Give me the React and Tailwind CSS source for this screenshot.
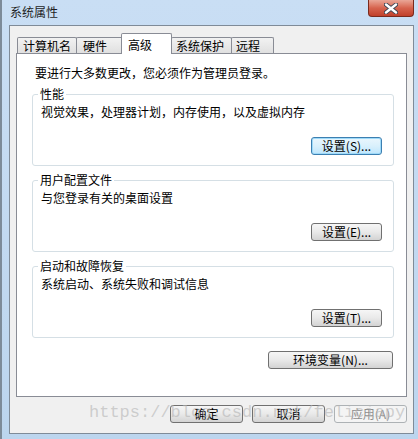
import React from 'react';

const FONT = { fontFamily: '"Noto Sans CJK SC", "Noto Sans", sans-serif' };

function Btn({ children, className = '', variant = 'normal' }) {
  const look = {
    normal: 'border-[#707070] bg-linear-to-b from-[#f6f6f6] via-[#e9e9e9] to-[#d3d3d3] text-black',
    default: 'border-[#3c7fb1] bg-linear-to-b from-[#eaf6fd] via-[#d9f0fc] to-[#bee6fd] text-black shadow-[inset_0_0_0_1px_#9edaf9]',
    disabled: 'border-[#adb2b5] bg-[#f4f4f4] text-[#8d8d8d]',
  }[variant];
  return (
    <div className={`h-[18px] flex items-center justify-center rounded-[3px] border text-[12px] leading-[14px] ${look} ${className}`}>
      {children}
    </div>
  );
}

function Group({ title, desc, button, className = '' }) {
  return (
    <fieldset className={`mx-[15px] mr-[12px] border border-[#d5dfe5] rounded-[3px] pb-[10px] ${className}`}>
      <legend className="ml-[5px] px-[2px] text-[12px] leading-[14px]">{title}</legend>
      <div className="pl-[8px] mt-[4px] text-[12px] leading-[14px]">{desc}</div>
      <div className="flex justify-end pr-[11px] mt-[18px]">{button}</div>
    </fieldset>
  );
}

const TABS = [
  { label: '计算机名', w: 'w-[60px]', pl: 'pl-[5px]' },
  { label: '硬件', w: 'w-[47px]', pl: 'pl-[6px]' },
  { label: '高级', w: 'w-[51px]', pl: 'pl-[6px]', active: true },
  { label: '系统保护', w: 'w-[61px]', pl: 'pl-[4px]' },
  { label: '远程', w: 'w-[43px]', pl: 'pl-[4px]' },
];

export default function App() {
  return (
    <div style={FONT} className="w-[418px] h-[439px] bg-linear-to-b from-[#c9def4] to-[#bcd5ee] border-l-2 border-[#7d8b99] flex flex-col relative overflow-hidden text-black">
      {/* title bar */}
      <div className="h-[25px] flex justify-between shrink-0">
        <div className="pl-[8px] pt-[5px] text-[12px] leading-[14px] text-[#1e1e1e]">系统属性</div>
        <div className="mr-[4px] w-[46px] h-[17px] rounded-b-[4px] border border-t-0 border-[#7a2a1d] bg-linear-to-b from-[#e9a697] via-[#d6634e] to-[#c0402b] flex items-center justify-center">
          <svg width="14" height="11" viewBox="0 0 14 11">
            <path d="M2 1.5 L12 9.5 M12 1.5 L2 9.5" stroke="#3d4452" strokeWidth="4.2" strokeLinecap="round" />
            <path d="M2 1.5 L12 9.5 M12 1.5 L2 9.5" stroke="#ffffff" strokeWidth="2.4" strokeLinecap="round" />
          </svg>
        </div>
      </div>

      {/* client */}
      <div className="ml-[7px] mr-[4px] mb-[5px] flex-1 border border-[#7f8b98] bg-[#f0f0f0] flex flex-col">
        <div className="ml-[6px] mr-[6px] mt-[7px]">
          {/* tabs */}
          <div className="flex items-end h-[20px] pl-[1px]">
            {TABS.map((t) =>
              t.active ? (
                <div key={t.label} className={`${t.w} ${t.pl} h-[21px] -mb-[1px] -mx-[1px] bg-white border border-b-0 border-[#898c95] rounded-t-[2px] text-[12px] leading-[14px] pt-[4px] relative z-10`}>
                  {t.label}
                </div>
              ) : (
                <div key={t.label} className={`${t.w} ${t.pl} h-[16px] bg-linear-to-b from-[#f2f2f2] to-[#e0e0e0] border border-b-0 border-l-[#898c95] border-t-[#898c95] border-r-[#898c95] rounded-t-[2px] text-[12px] leading-[14px] pt-[1px] -mr-[1px]`}>
                  {t.label}
                </div>
              )
            )}
          </div>

          {/* panel */}
          <div className="h-[344px] bg-white border border-[#898c95] flex flex-col">
            <div className="pl-[18px] mt-[12px] text-[12px] leading-[14px]">要进行大多数更改，您必须作为管理员登录。</div>
            <Group
              className="mt-[7px]"
              title="性能"
              desc="视觉效果，处理器计划，内存使用，以及虚拟内存"
              button={<Btn variant="default" className="w-[71px]">设置(S)...</Btn>}
            />
            <Group
              className="mt-[7px]"
              title="用户配置文件"
              desc="与您登录有关的桌面设置"
              button={<Btn className="w-[71px]">设置(E)...</Btn>}
            />
            <Group
              className="mt-[7px]"
              title="启动和故障恢复"
              desc="系统启动、系统失败和调试信息"
              button={<Btn className="w-[71px]">设置(T)...</Btn>}
            />
            <div className="flex justify-end mr-[13px] mt-[13px]">
              <Btn className="w-[125px]">环境变量(N)...</Btn>
            </div>
          </div>
        </div>

        {/* dialog buttons */}
        <div className="flex justify-end gap-[9px] mr-[6px] mt-[8px]">
          <Btn className="w-[73px]">确定</Btn>
          <Btn className="w-[73px]">取消</Btn>
          <Btn variant="disabled" className="w-[73px]">应用(A)</Btn>
        </div>
      </div>

      {/* watermark */}
      <div className="absolute left-[87px] top-[402px] pointer-events-none text-[17px] leading-[22px] text-[#b4b4b4]/60" style={{ fontFamily: '"Liberation Mono", monospace' }}>
        https://blog.csdn.net/feliciapy
      </div>
    </div>
  );
}
